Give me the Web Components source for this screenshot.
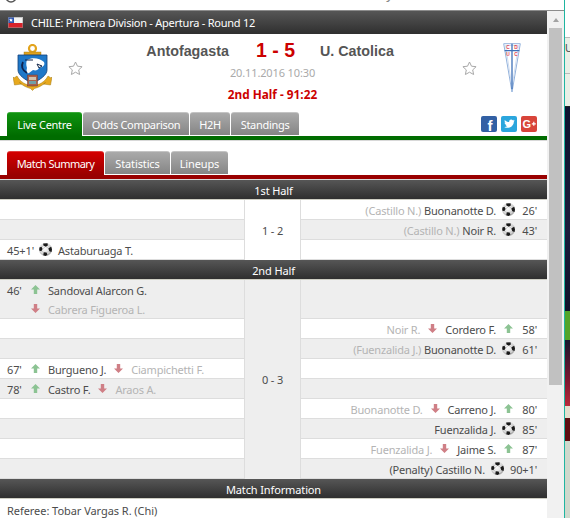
<!DOCTYPE html>
<html lang="en">
<head>
<meta charset="utf-8">
<title>Match summary</title>
<style>
html,body{margin:0;padding:0;height:518px;overflow:hidden;background:#fff}
body{font:11px "Noto Sans","Liberation Sans",sans-serif;letter-spacing:-.13px;color:#4c4c4c}
</style>
</head>
<body>
<fs-app>
  <fs-urlbar slot="url"><b>www.flashscore.com</b>/match/ISKXrtV2/#match-summary</fs-urlbar>

  <fs-title-bar>CHILE: Primera Division - Apertura - Round 12</fs-title-bar>

  <fs-match-head home="Antofagasta" away="U. Catolica" score="1 - 5" date="20.11.2016 10:30" status="2nd Half - 91:22"></fs-match-head>

  <fs-tabs color="green" social>
    <fs-tab color="green" active style="--w:75px">Live Centre</fs-tab>
    <fs-tab style="--w:106px">Odds Comparison</fs-tab>
    <fs-tab style="--w:40px">H2H</fs-tab>
    <fs-tab style="--w:68px">Standings</fs-tab>
    <fs-social slot="end"></fs-social>
  </fs-tabs>

  <fs-tabs color="red" sub>
    <fs-tab color="red" active style="--w:97px;--ls:-.55px">Match Summary</fs-tab>
    <fs-tab style="--w:65px;--ls:-.13px">Statistics</fs-tab>
    <fs-tab style="--w:57px;--ls:-.13px">Lineups</fs-tab>
  </fs-tabs>

  <fs-head>1st Half</fs-head>
  <fs-half score="1 - 2">
    <fs-event slot="left"></fs-event>
    <fs-event slot="left" alt></fs-event>
    <fs-event slot="left"><fs-time>45+1'</fs-time><fs-ic kind="ball"></fs-ic><fs-player>Astaburuaga T.</fs-player></fs-event>

    <fs-event slot="right" end><fs-player sub>(Castillo N.)</fs-player><fs-player>Buonanotte D.</fs-player><fs-ic kind="ball"></fs-ic><fs-time>26'</fs-time></fs-event>
    <fs-event slot="right" end alt><fs-player sub>(Castillo N.)</fs-player><fs-player>Noir R.</fs-player><fs-ic kind="ball"></fs-ic><fs-time>43'</fs-time></fs-event>
    <fs-event slot="right"></fs-event>
  </fs-half>

  <fs-head>2nd Half</fs-head>
  <fs-half score="0 - 3" alt>
    <fs-event slot="left" alt open><fs-time>46'</fs-time><fs-ic kind="up"></fs-ic><fs-player>Sandoval Alarcon G.</fs-player></fs-event>
    <fs-event slot="left" alt><fs-time></fs-time><fs-ic kind="down" first></fs-ic><fs-player sub>Cabrera Figueroa L.</fs-player></fs-event>
    <fs-event slot="left"></fs-event>
    <fs-event slot="left" alt></fs-event>
    <fs-event slot="left"><fs-time>67'</fs-time><fs-ic kind="up"></fs-ic><fs-player>Burgueno J.</fs-player><fs-ic kind="down"></fs-ic><fs-player sub>Ciampichetti F.</fs-player></fs-event>
    <fs-event slot="left" alt><fs-time>78'</fs-time><fs-ic kind="up"></fs-ic><fs-player>Castro F.</fs-player><fs-ic kind="down"></fs-ic><fs-player sub>Araos A.</fs-player></fs-event>
    <fs-event slot="left"></fs-event>
    <fs-event slot="left" alt></fs-event>
    <fs-event slot="left"></fs-event>
    <fs-event slot="left" alt></fs-event>

    <fs-event slot="right" alt tall></fs-event>
    <fs-event slot="right" end><fs-player sub>Noir R.</fs-player><fs-ic kind="down"></fs-ic><fs-player>Cordero F.</fs-player><fs-ic kind="up"></fs-ic><fs-time>58'</fs-time></fs-event>
    <fs-event slot="right" end alt><fs-player sub>(Fuenzalida J.)</fs-player><fs-player>Buonanotte D.</fs-player><fs-ic kind="ball"></fs-ic><fs-time>61'</fs-time></fs-event>
    <fs-event slot="right"></fs-event>
    <fs-event slot="right" alt></fs-event>
    <fs-event slot="right" end><fs-player sub>Buonanotte D.</fs-player><fs-ic kind="down"></fs-ic><fs-player>Carreno J.</fs-player><fs-ic kind="up"></fs-ic><fs-time>80'</fs-time></fs-event>
    <fs-event slot="right" end alt><fs-player>Fuenzalida J.</fs-player><fs-ic kind="ball"></fs-ic><fs-time>85'</fs-time></fs-event>
    <fs-event slot="right" end><fs-player sub>Fuenzalida J.</fs-player><fs-ic kind="down"></fs-ic><fs-player>Jaime S.</fs-player><fs-ic kind="up"></fs-ic><fs-time>87'</fs-time></fs-event>
    <fs-event slot="right" end alt><fs-player>(Penalty)</fs-player><fs-player>Castillo N.</fs-player><fs-ic kind="ball"></fs-ic><fs-time>90+1'</fs-time></fs-event>
  </fs-half>

  <fs-head>Match Information</fs-head>
  <fs-info>Referee: Tobar Vargas R. (Chi)</fs-info>
</fs-app>

<script>
function def(name, css, html){
  const C = class extends HTMLElement{
    constructor(){super();this.attachShadow({mode:'open'});}
    connectedCallback(){
      const h = typeof html==='function'?html(this):html;
      this.shadowRoot.innerHTML='<style>'+css+'</style>'+h;
    }
  };
  customElements.define(name,C);
}

def('fs-app',`
:host{display:flex;width:570px;height:518px;overflow:hidden;background:#fff}
.col{width:564px;display:flex;flex-direction:column}
.row{display:flex;height:507px}
.main{width:547px;height:507px;overflow:hidden;display:flex;flex-direction:column}
`,`<div class="col"><slot name="url"></slot><div class="row"><div class="main"><slot></slot></div><fs-scrollbar></fs-scrollbar></div></div><fs-strip></fs-strip>`);

def('fs-urlbar',`
:host{display:flex;align-items:flex-end;height:10px;border-bottom:1px solid #8c8c8c;overflow:hidden;background:#fff;padding-left:5px;gap:9px;letter-spacing:0}
.t{font:15px "Liberation Sans",sans-serif;color:#888;white-space:nowrap;line-height:18px;margin-bottom:7px}
::slotted(b){font-weight:normal;color:#333}
svg{flex:none;margin-bottom:7px}
`,`<svg width="12" height="12" viewBox="0 0 12 12"><circle cx="6" cy="6" r="5" fill="none" stroke="#555" stroke-width="1.5"/></svg><span class="t"><slot></slot></span>`);

def('fs-title-bar',`
:host{display:flex;align-items:center;height:23px;flex:none;background:linear-gradient(#565656,#2f2f2f);color:#fff;padding-left:8px;gap:8px;white-space:nowrap;letter-spacing:-.24px}
svg{flex:none}
`,`<svg width="15" height="11" viewBox="0 0 15 11"><rect width="15" height="11" fill="#f4f4f4"/><rect y="6" width="15" height="5" fill="#d8222a"/><rect width="6" height="6" fill="#2f55b0"/><path d="M3 1.300l.6 1.300 1.400.1-1.100.9.4 1.400L3 3.900l-1.300.8.4-1.400-1.100-.9 1.400-.1z" fill="#fff"/><rect x=".5" y=".5" width="14" height="10" fill="none" stroke="#999" stroke-opacity=".5"/></svg><span><slot></slot></span>`);

const STAR=`<svg width="15" height="15" viewBox="0 0 15 15"><path d="M7.500 1l2 4.200 4.600.5-3.400 3.200.9 4.600-4.100-2.300-4.100 2.300.9-4.600L.9 5.700l4.600-.5z" fill="#fff" stroke="#a8a8a8" stroke-width="1"/></svg>`;

const CREST1=`<svg width="39" height="48" viewBox="0 0 39 48">
<circle cx="19.500" cy="4.500" r="3.500" fill="none" stroke="#e2a31c" stroke-width="2.200"/>
<rect x="11" y="8" width="17" height="3" fill="#e2a31c" stroke="#9a7415" stroke-width=".4"/>
<path d="M1 34l3-2c3 6 9 9 15.500 10 6.500-1 12.500-4 15.500-10l3 2 1-1-1.500 8-7-1 2-1.500c-3 3-7 5-11 6l-2 2-2-2c-4-1-8-3-11-6l2 1.500-7 1L0 33z" fill="#e8a91e" stroke="#a07a14" stroke-width=".5"/>
<path d="M5 11h29v15c0 5-7 10-14.500 13C12 36 5 31 5 26z" fill="#1f78c8" stroke="#123f7a" stroke-width=".8"/>
<path d="M14 16c5-3 13-2 17 2 1 2 0 4-2 5l-3 1c-1 2-3 3-6 2l-4 3c-2 1-3-2-2-5-1-3-1-6 0-8z" fill="#fff"/>
<path d="M10 18c-2 4-1 8 4 11" fill="none" stroke="#10244f" stroke-width="1.800"/>
<path d="M24 20l5 2-3 2zM12 16h8" fill="none" stroke="#14274a" stroke-width="1"/>
<rect x="14.500" y="31" width="10" height="11" fill="#a8604a" stroke="#6d3b2c" stroke-width=".5"/>
<rect x="16" y="33" width="7" height="3" fill="#cfc2ae"/>
<rect x="16" y="37" width="7" height="3" fill="#6fa0a8"/>
</svg>`;

const CREST2=`<svg width="18" height="50" viewBox="0 0 18 50">
<path d="M.7.700h16.600L9 49z" fill="#fff" stroke="#93b2dc" stroke-width="1"/>
<path d="M2.500 2.500h13L9 44z" fill="none" stroke="#c4d4ec" stroke-width=".8"/>
<path d="M9 .7V46M1.600 7.700h14.800" fill="none" stroke="#3e70b8" stroke-width="1.300"/>
<g fill="#e2404f" font-family="Liberation Sans,sans-serif" font-size="4.800" font-weight="700" text-anchor="middle">
<text x="5" y="6">C</text><text x="12.800" y="6">D</text><text x="5" y="13">U</text><text x="12.800" y="13">C</text></g>
</svg>`;

def('fs-match-head',`
:host{display:grid;grid-template-columns:68px 15px 1fr 15px 70px;height:78px;flex:none;background:#fff}
.crest{display:flex;justify-content:center;padding:10px 4px 0 0}
.crest.b{padding:9px 0 0 0}
.star{padding-top:27px}
.mid{display:flex;flex-direction:column;align-items:center}
.teams{display:grid;grid-template-columns:1fr auto 1fr;column-gap:27px;width:100%;box-sizing:border-box;padding-left:6px;align-items:center;height:33px;letter-spacing:0}
.team{font:bold 14.300px "Liberation Sans",sans-serif;color:#555;white-space:nowrap}
.team.l{text-align:right}
.team.r{margin-left:-2px}
.score{font:bold 19.500px "Liberation Sans",sans-serif;color:#c00;white-space:nowrap}
.date{color:#aaa;height:11px;line-height:11px}
.status{font-weight:bold;font-size:11.800px;letter-spacing:0;color:#c00;line-height:19px;margin-top:7px}
`,h=>`<div class="crest">${CREST1}</div><div class="star">${STAR}</div>
<div class="mid"><div class="teams"><span class="team l">${h.getAttribute('home')}</span><span class="score">${h.getAttribute('score')}</span><span class="team r">${h.getAttribute('away')}</span></div>
<div class="date">${h.getAttribute('date')}</div><div class="status">${h.getAttribute('status')}</div></div>
<div class="star">${STAR}</div><div class="crest b">${CREST2}</div>`);

def('fs-tabs',`
:host{display:flex;flex:none;padding:0 10px 0 7px;height:24px;gap:1px}
:host([color=green]){border-bottom:4px solid #006c00;box-shadow:0 1px 0 #d8d8d8}
:host([color=red]){border-bottom:4px solid #990000;margin:11px 0 1px;box-shadow:0 1px 0 #d8d8d8}
.end{margin-left:auto}
`,`<slot></slot><div class="end"><slot name="end"></slot></div>`);

def('fs-tab',`
:host{display:flex;align-items:center;justify-content:center;width:var(--w);height:24px;box-sizing:border-box;border-radius:3px 3px 0 0;background:linear-gradient(#aaa,#858585);color:#fff;white-space:nowrap;border-bottom:1px solid #fff;border-top:1px solid #c4c4c4;letter-spacing:var(--ls,-.3px)}
:host([color=green]){background:linear-gradient(#0f930f,#006c00);border:0;border-top:1px solid #3aa93a}
:host([color=red]){background:linear-gradient(#d40000,#990000);border:0;border-top:1px solid #e04040}
`,`<slot></slot>`);

def('fs-social',`
:host{display:flex;gap:4px;padding-top:4px}
svg{display:block}
`,`<svg width="16" height="16" viewBox="0 0 16 16"><rect width="16" height="16" rx="2" fill="#3260a4"/><text x="9" y="15" text-anchor="middle" font-family="Liberation Sans,sans-serif" font-weight="700" font-size="15" fill="#fff">f</text></svg>
<svg width="16" height="16" viewBox="0 0 16 16"><rect width="16" height="16" rx="2" fill="#2ba6dd"/><path d="M13.300 4.600c-.4.200-.8.300-1.200.3.400-.3.800-.7.900-1.200-.4.300-.9.400-1.300.5-.9-1-2.600-.8-3.300.4-.3.500-.3 1-.2 1.500-1.700-.1-3.200-.9-4.300-2.200-.6 1-.3 2.200.6 2.800-.3 0-.7-.1-1-.3 0 1 .8 1.900 1.800 2.100-.3.100-.6.100-1 0 .3.900 1.100 1.500 2 1.500-.9.700-2 1-3.100.9 3.300 2.100 8 .5 9.300-3.200.2-.7.300-1.400.3-2 .4-.3.800-.7 1-1.100z" fill="#fff"/></svg>
<svg width="16" height="16" viewBox="0 0 16 16"><rect width="16" height="16" rx="2" fill="#d8443a"/><text x="1.500" y="12" font-family="Liberation Sans,sans-serif" font-weight="700" font-size="11" fill="#fff">G</text><path d="M10.800 7.800h4M12.800 5.800v4" stroke="#fff" stroke-width="1.200"/></svg>`);

def('fs-head',`
:host{display:flex;align-items:center;justify-content:center;height:20px;box-sizing:border-box;flex:none;padding-top:2px;background:linear-gradient(#565656,#2f2f2f);background-clip:padding-box;border-bottom:1px solid #cfcfc4;color:#fff}
`,`<slot></slot>`);

def('fs-half',`
:host{display:grid;grid-template-columns:245px 55px 247px;flex:none}
.l{border-right:1px solid #ddd;display:flex;flex-direction:column}
.r{border-left:1px solid #ddd;display:flex;flex-direction:column}
.c{display:flex;align-items:center;justify-content:center;background:#fff}
:host([alt]) .c{background:#eee}
`,h=>`<div class="l"><slot name="left"></slot></div><div class="c">${h.getAttribute('score')}</div><div class="r"><slot name="right"></slot></div>`);

def('fs-event',`
:host{display:flex;align-items:center;height:20px;box-sizing:border-box;border-bottom:1px solid #ddd;background:#fff;padding:0 10px 0 7px;white-space:nowrap}
:host([alt]){background:#eee}
:host([end]){justify-content:flex-end}
:host([open]){border-bottom:0;height:19px}
:host([tall]){height:39px}
`,`<slot></slot>`);

def('fs-time',`
:host{display:inline-block;min-width:19px;margin-right:5px;padding-top:2px;flex:none}
:host-context(fs-event[end]){min-width:16px;margin:0 0 0 6px;text-align:right}
`,`<slot></slot>`);

def('fs-player',`
:host{display:inline-block;flex:none;padding-top:2px;letter-spacing:-.2px}
:host([sub]){color:#b4b4b4}
:host-context(fs-event[end]){margin-left:3px}
`,`<slot></slot>`);

const BALL=`<svg width="13" height="13" viewBox="0 0 13 13"><defs><radialGradient id="b" cx=".45" cy=".42" r=".62"><stop offset="0" stop-color="#fbfbfb"/><stop offset=".65" stop-color="#dcdcdc"/><stop offset="1" stop-color="#8c8c8c"/></radialGradient></defs><circle cx="6.500" cy="6.500" r="6.500" fill="url(#b)"/><path d="M4.200.5L8.500.3 8.900 2.400 6.800 3.700 4.400 2.500zM.4 4.500l2.200-.7 1 2.300-1.300 2.100L.2 7.600zM9.800 5l2.400-1.300.8 2.700-.5 2.600-2.200-.7-1-2.700zM4.700 9.300l2.900.1.800 2.400-1.800 1.200-2.300-.7z" fill="#191919"/><path d="M4 3L2.700 4M9 2.500l1.500 1.600M3 8.300L4.700 9.500M8 9.400L9.700 8.500M5.800 4l-2 2M7.300 4l2.300 1.200" stroke="#aaa" stroke-width=".5" fill="none"/></svg>`;
const UP=`<svg width="9" height="9" viewBox="0 0 9 9"><path d="M4.500 0L9 4.500H6.200V9H2.800V4.500H0z" fill="#8cc393"/></svg>`;
const DOWN=`<svg width="9" height="9" viewBox="0 0 9 9"><path d="M4.500 9L0 4.500H2.800V0H6.200V4.500H9z" fill="#cf7f86"/></svg>`;
def('fs-ic',`
:host{display:inline-flex;flex:none;margin-right:8px;align-items:center}
:host([kind=ball]){margin-right:6px}
:host([kind=down]){margin-left:8px}
:host([kind=down][first]){margin-left:0}
:host([kind=ball]):host-context(fs-event[end]){margin-left:6px;margin-right:0}
:host([kind=down]):host-context(fs-event[end]){margin-left:8px;margin-right:5px}
:host([kind=up]):host-context(fs-event[end]){margin-left:8px;margin-right:2px}
svg{display:block}
`,h=>({ball:BALL,up:UP,down:DOWN})[h.getAttribute('kind')]);

def('fs-info',`
:host{display:flex;align-items:center;height:20px;box-sizing:border-box;padding:2px 0 0 7px;background:#fff;flex:none;letter-spacing:-.05px}
`,`<slot></slot>`);

def('fs-scrollbar',`
:host{display:flex;flex-direction:column;width:17px;height:507px;background:#f1f1f1;box-sizing:border-box;padding:7px 2px 0}
.a{width:0;height:0;margin:0 auto;border:solid transparent;border-width:0 3.500px 4px;border-bottom-color:#a3a3a3}
.t{height:357px;background:#c1c1c1;margin-top:6px}
`,`<div class="a"></div><div class="t"></div>`);

def('fs-strip',`
:host{display:flex;flex-direction:column;width:6px;height:518px;box-sizing:border-box;border-left:1px solid #1fb5a0;background:#fff;overflow:hidden;flex:none;font:11px "Liberation Sans",sans-serif;color:#555}
.w{height:37px;background:#fff}
.u{height:35px;background:#e9efe6;border-top:1px solid #bbb;line-height:21px}
.v{height:32px;background:#e9efe6;border-top:1px solid #bbb}
.d1{height:204px;background:linear-gradient(#0e1330,#1b1c3c 60%,#10122b);border-top:1px solid #222}
.g{height:29px;background:#52a52a}
.d2{height:66px;background:linear-gradient(#17172f,#7a1830 60%,#b92b3c)}
.p{height:12px;background:#e4dfce}
.dr{height:23px;background:#5e0f12}
.s{flex:1;background:#cfd8cc}
`,`<div class="w"></div><div class="u">U</div><div class="v"></div><div class="d1"></div><div class="g"></div><div class="d2"></div><div class="p"></div><div class="dr"></div><div class="s"></div>`);
</script>
</body>
</html>
